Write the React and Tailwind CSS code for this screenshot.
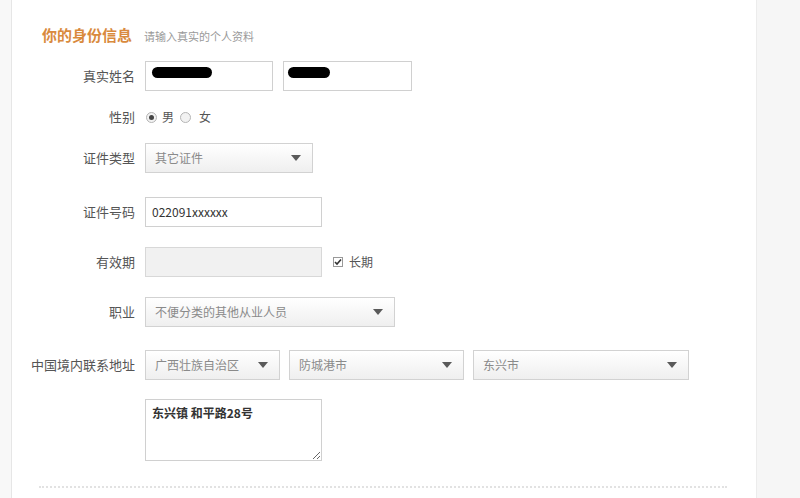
import React from 'react';

const font = { fontFamily: '"Noto Sans CJK SC", "Noto Sans", sans-serif' };

const Arrow = () => (
    <svg width="10" height="6" viewBox="0 0 10 6" className="shrink-0">
        <path d="M0 0 L10 0 L5 6 Z" fill="#5a5a5a" />
    </svg>
);

const Select = ({ value, className }) => (
    <div
        className={`flex h-[30px] items-center justify-between border border-[#d2d2d2] bg-gradient-to-b from-white to-[#efefef] pl-[9px] pr-[11px] text-[12px] text-[#8a8a8a] ${className}`}
    >
        <span>{value}</span>
        <Arrow />
    </div>
);

const Row = ({ label, children, className = '' }) => (
    <div className={`flex items-center ${className}`}>
        <div className="w-[133px] shrink-0 pr-[10px] text-right text-[13px] text-[#555]">{label}</div>
        <div className="flex items-center">{children}</div>
    </div>
);

const Radio = ({ checked }) => (
    <span className="flex h-[11px] w-[11px] items-center justify-center rounded-full border border-[#b5b5b5] bg-[#f2f2f2]">
        {checked && <span className="h-[5px] w-[5px] rounded-full bg-[#444]" />}
    </span>
);

export default function App() {
    return (
        <div className="flex h-[498px] w-[800px] overflow-hidden bg-white" style={font}>
            {/* left gutter */}
            <div className="w-[12px] shrink-0 border-r border-[#e6e6e6] bg-[#f8f8f8]" />

            <div className="flex-1 pt-[25px]">
                <div className="flex h-[20px] items-end pl-[30px]">
                    <h2 className="text-[15px] font-bold leading-[20px] text-[#d98a3d]">你的身份信息</h2>
                    <span className="ml-[12px] text-[11px] leading-[18px] text-[#9a9a9a]">请输入真实的个人资料</span>
                </div>

                <Row label="真实姓名" className="mt-[16px]">
                    <div className="flex h-[30px] w-[128px] items-start border border-[#d0d0d0] pl-[6px] pt-[5px]">
                        <span className="h-[11px] w-[60px] rounded-full bg-black" />
                    </div>
                    <div className="ml-[10px] flex h-[30px] w-[129px] items-start border border-[#d0d0d0] pl-[4px] pt-[5px]">
                        <span className="h-[11px] w-[42px] rounded-full bg-black" />
                    </div>
                </Row>

                <Row label="性别" className="mt-[16px] h-[20px]">
                    <div className="flex items-center text-[12px] text-[#555]">
                        <span className="ml-[1px]"><Radio checked /></span>
                        <span className="ml-[5px]">男</span>
                        <span className="ml-[6px]"><Radio /></span>
                        <span className="ml-[8px]">女</span>
                    </div>
                </Row>

                <Row label="证件类型" className="mt-[16px]">
                    <Select value="其它证件" className="w-[168px]" />
                </Row>

                <Row label="证件号码" className="mt-[24px]">
                    <div className="flex h-[30px] w-[177px] items-center border border-[#d0d0d0] pl-[6px] text-[12px] text-[#333]">
                        022091xxxxxx
                    </div>
                </Row>

                <Row label="有效期" className="mt-[20px]">
                    <div className="h-[30px] w-[177px] border border-[#d8d8d8] bg-[#f1f1f1]" />
                    <span className="ml-[11px] flex h-[10px] w-[10px] items-center justify-center border border-[#999] bg-white">
                        <svg width="8" height="8" viewBox="0 0 8 8">
                            <path d="M1 4 L3 6 L7 1.5" stroke="#333" strokeWidth="1.6" fill="none" />
                        </svg>
                    </span>
                    <span className="ml-[6px] text-[12px] text-[#555]">长期</span>
                </Row>

                <Row label="职业" className="mt-[20px]">
                    <Select value="不便分类的其他从业人员" className="w-[250px]" />
                </Row>

                <Row label="中国境内联系地址" className="mt-[23px]">
                    <Select value="广西壮族自治区" className="w-[135px]" />
                    <Select value="防城港市" className="ml-[9px] w-[175px]" />
                    <Select value="东兴市" className="ml-[9px] w-[216px]" />
                </Row>

                <div className="mt-[19px] pl-[133px]">
                    <textarea
                        readOnly
                        defaultValue="东兴镇 和平路28号"
                        className="block h-[62px] w-[177px] border border-[#d0d0d0] px-[6px] py-[5px] text-[12px] font-bold leading-[16px] text-[#333] outline-none"
                        style={font}
                    />
                </div>

                <div className="ml-[27px] mt-[25px] w-[688px] border-t-2 border-dotted border-[#e2e2e2]" />
            </div>

            {/* right sidebar */}
            <div className="w-[44px] shrink-0 border-l border-[#ececec] bg-[#f6f6f6]" />
        </div>
    );
}
